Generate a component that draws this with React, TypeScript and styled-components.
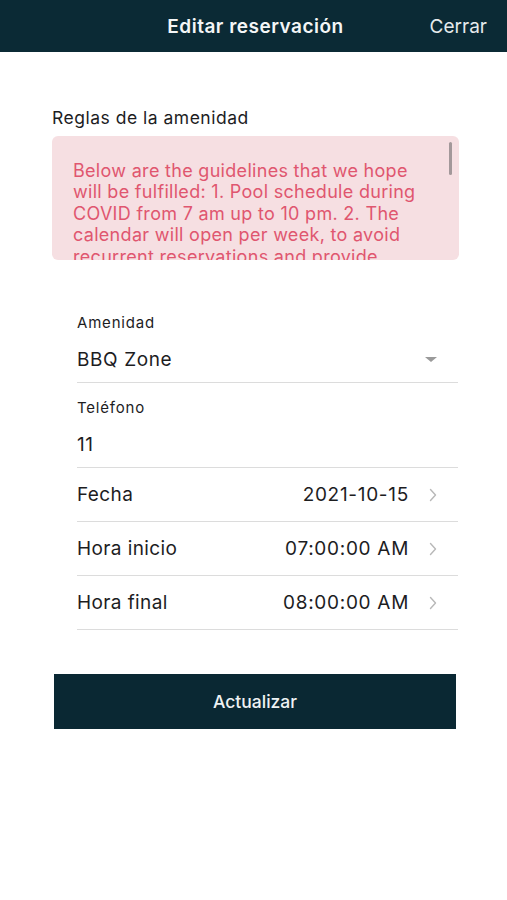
import React from "react";
import styled, { createGlobalStyle } from "styled-components";

const Global = createGlobalStyle`
  html, body { margin: 0; padding: 0; background: #ffffff; }
  body { font-family: Inter, "Liberation Sans", Arial, sans-serif; -webkit-font-smoothing: antialiased; }
  * { box-sizing: border-box; }
`;

const Page = styled.div`
  width: 507px;
  min-height: 900px;
  background: #fff;
  display: flex;
  flex-direction: column;
`;

const Header = styled.header`
  height: 52px;
  background: #0b2a35;
  display: grid;
  grid-template-columns: 1fr auto 1fr;
  align-items: center;
  padding: 0 20px;
`;

const Title = styled.h1`
  grid-column: 2;
  margin: 0 0 0 4px;
  color: #f4f6f7;
  font-size: 19px;
  font-weight: 600;
  letter-spacing: 0.5px;
`;

const Close = styled.span`
  grid-column: 3;
  justify-self: end;
  color: #e6eaec;
  font-size: 19px;
  font-weight: 400;
`;

const Body = styled.main`
  display: flex;
  flex-direction: column;
  padding: 55px 48px 0 52px;
`;

const SectionLabel = styled.div`
  font-size: 17.5px;
  letter-spacing: 0.5px;
  color: #1d1d1f;
  margin-bottom: 8px;
`;

const Rules = styled.div`
  position: relative;
  height: 124px;
  background: #f6dfe2;
  border-radius: 6px;
  overflow: hidden;
  padding: 24px 28px 0 21px;
  color: #e0566f;
  font-size: 18px;
  line-height: 21.4px;
  letter-spacing: 0.3px;
`;

const ScrollThumb = styled.div`
  position: absolute;
  right: 7px;
  top: 6px;
  width: 3px;
  height: 33px;
  border-radius: 2px;
  background: #a3989a;
`;

const Form = styled.section`
  display: flex;
  flex-direction: column;
  margin: 38px 1px 0 25px;
`;

const Field = styled.div`
  border-bottom: 1px solid #dcdcdc;
  padding: 16px 0 11px;
`;

const FieldLabel = styled.div`
  font-size: 15px;
  line-height: 18px;
  letter-spacing: 0.8px;
  color: #1d1d1f;
  margin-bottom: 15px;
`;

const FieldValue = styled.div`
  display: flex;
  align-items: center;
  justify-content: space-between;
  font-size: 19px;
  letter-spacing: 0.6px;
  color: #1d1d1f;
  height: 24px;
`;

const Caret = styled.span`
  width: 0;
  height: 0;
  border-left: 6px solid transparent;
  border-right: 6px solid transparent;
  border-top: 5px solid #9a9a9a;
  margin-right: 21px;
`;

const Row = styled.div`
  display: flex;
  align-items: center;
  height: 54px;
  border-bottom: 1px solid #dcdcdc;
  font-size: 19px;
  letter-spacing: 0.4px;
  color: #1d1d1f;
`;

const RowLabel = styled.span`
  flex: 1;
`;

const RowValue = styled.span`
  margin-right: 20px;
  letter-spacing: 0.7px;
`;

const Chevron = styled.svg`
  width: 8px;
  height: 14px;
  margin-right: 21px;
`;

const Button = styled.button`
  margin: 44px 0 0 2px;
  height: 55px;
  width: 402px;
  border: none;
  background: #0a2833;
  color: #eef2f3;
  font-family: inherit;
  font-size: 17.5px;
  font-weight: 500;
`;

const ChevronIcon = () => (
  <Chevron viewBox="0 0 8 14">
    <path d="M1.5 1.5 L6.5 7 L1.5 12.5" fill="none" stroke="#b8b8b8" strokeWidth="1.4" strokeLinecap="round" strokeLinejoin="round" />
  </Chevron>
);

export default function App() {
  return (
    <Page>
      <Global />
      <Header>
        <Title>Editar reservación</Title>
        <Close>Cerrar</Close>
      </Header>
      <Body>
        <SectionLabel>Reglas de la amenidad</SectionLabel>
        <Rules>
          Below are the guidelines that we hope will be fulfilled: 1. Pool schedule during COVID from 7 am up to 10 pm. 2. The calendar will open per week, to avoid recurrent reservations and provide opportunities to all residents.
          <ScrollThumb />
        </Rules>
        <Form>
          <Field>
            <FieldLabel>Amenidad</FieldLabel>
            <FieldValue>
              BBQ Zone
              <Caret />
            </FieldValue>
          </Field>
          <Field>
            <FieldLabel>Teléfono</FieldLabel>
            <FieldValue>11</FieldValue>
          </Field>
          <Row>
            <RowLabel>Fecha</RowLabel>
            <RowValue>2021-10-15</RowValue>
            <ChevronIcon />
          </Row>
          <Row>
            <RowLabel>Hora inicio</RowLabel>
            <RowValue>07:00:00 AM</RowValue>
            <ChevronIcon />
          </Row>
          <Row>
            <RowLabel>Hora final</RowLabel>
            <RowValue>08:00:00 AM</RowValue>
            <ChevronIcon />
          </Row>
        </Form>
        <Button>Actualizar</Button>
      </Body>
    </Page>
  );
}
